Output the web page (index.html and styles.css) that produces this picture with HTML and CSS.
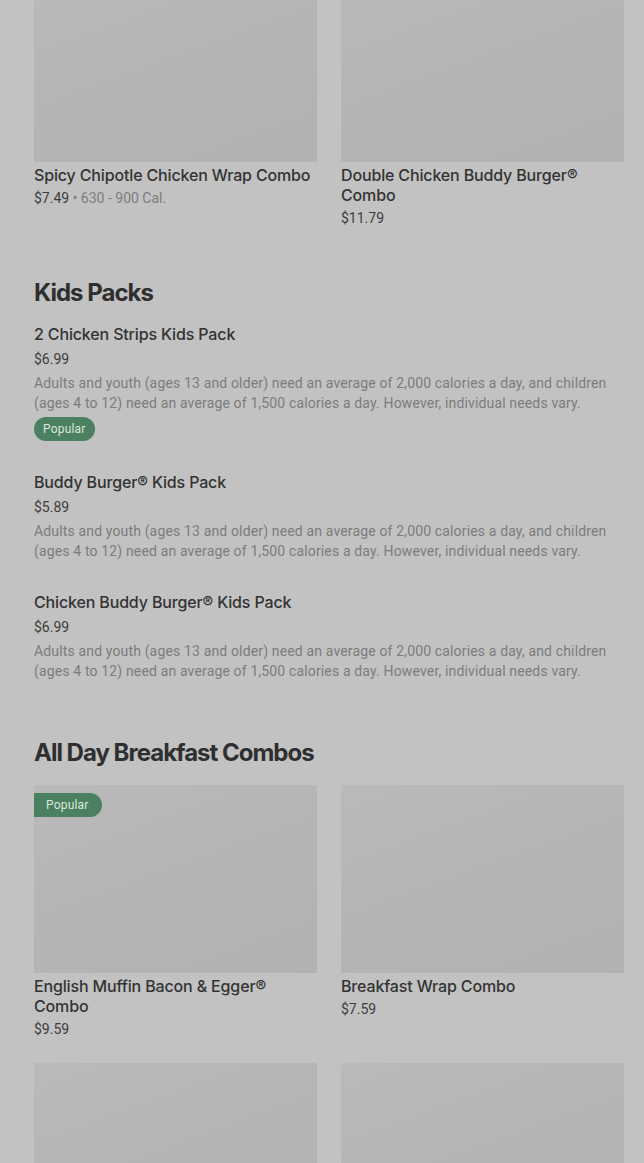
FILE: index.html
```html
<!DOCTYPE html>
<html lang="en">
<head>
<meta charset="utf-8">
<title>Menu</title>
<link rel="stylesheet" href="styles.css">
</head>
<body>
<main class="menu">
  <section class="section section-first">
    <div class="grid">
      <article class="card">
        <div class="card-media"></div>
        <h3 class="card-title">Spicy Chipotle Chicken Wrap Combo</h3>
        <p class="card-meta"><span class="price">$7.49</span><span class="dot"> • </span><span class="cal">630 - 900 Cal.</span></p>
      </article>
      <article class="card">
        <div class="card-media"></div>
        <h3 class="card-title">Double Chicken Buddy Burger® Combo</h3>
        <p class="card-meta"><span class="price">$11.79</span></p>
      </article>
    </div>
  </section>

  <section class="section">
    <h2 class="section-title">Kids Packs</h2>
    <ul class="list">
      <li class="item">
        <h3 class="item-title">2 Chicken Strips Kids Pack</h3>
        <p class="item-price">$6.99</p>
        <p class="item-desc">Adults and youth (ages 13 and older) need an average of 2,000 calories a day, and children (ages 4 to 12) need an average of 1,500 calories a day. However, individual needs vary.</p>
        <span class="badge">Popular</span>
      </li>
      <li class="item">
        <h3 class="item-title">Buddy Burger® Kids Pack</h3>
        <p class="item-price">$5.89</p>
        <p class="item-desc">Adults and youth (ages 13 and older) need an average of 2,000 calories a day, and children (ages 4 to 12) need an average of 1,500 calories a day. However, individual needs vary.</p>
      </li>
      <li class="item">
        <h3 class="item-title">Chicken Buddy Burger® Kids Pack</h3>
        <p class="item-price">$6.99</p>
        <p class="item-desc">Adults and youth (ages 13 and older) need an average of 2,000 calories a day, and children (ages 4 to 12) need an average of 1,500 calories a day. However, individual needs vary.</p>
      </li>
    </ul>
  </section>

  <section class="section">
    <h2 class="section-title">All Day Breakfast Combos</h2>
    <div class="grid">
      <article class="card">
        <div class="card-media"><span class="badge badge-flag">Popular</span></div>
        <h3 class="card-title">English Muffin Bacon &amp; Egger® Combo</h3>
        <p class="card-meta"><span class="price">$9.59</span></p>
      </article>
      <article class="card">
        <div class="card-media"></div>
        <h3 class="card-title">Breakfast Wrap Combo</h3>
        <p class="card-meta"><span class="price">$7.59</span></p>
      </article>
      <article class="card">
        <div class="card-media"></div>
      </article>
      <article class="card">
        <div class="card-media"></div>
      </article>
    </div>
  </section>
</main>
</body>
</html>
```

FILE: styles.css
```css
* { box-sizing: border-box; }

html, body {
  margin: 0;
  padding: 0;
  background: #c2c2c2;
  height: 1163px;
  overflow: hidden;
}

body {
  font-family: "Roboto", "Liberation Sans", sans-serif;
  color: #333333;
}

.menu {
  padding: 0 20px 0 34px;
  margin-top: -26px;
  display: flex;
  flex-direction: column;
  gap: 41px;
}

.section-first {
  padding-bottom: 8px;
}

.grid {
  display: grid;
  grid-template-columns: 1fr 1fr;
  column-gap: 24px;
  row-gap: 24px;
}

.card {
  display: flex;
  flex-direction: column;
}

.card-media {
  position: relative;
  height: 188px;
  background: linear-gradient(160deg, #bababa 0%, #b5b5b5 45%, #b2b2b2 100%);
  margin-bottom: 3px;
}

.card-title {
  margin: 0;
  font-family: "Inter", "Roboto", sans-serif;
  font-weight: 500;
  font-size: 16px;
  line-height: 20px;
  letter-spacing: -0.15px;
  color: #333333;
}

.card-meta {
  margin: 3px 0 0;
  font-size: 14px;
  line-height: 20px;
  color: #3d3d3d;
}

.card-meta .dot { color: #7a7a7a; }
.card-meta .cal { color: #7d7d7d; }

.section-title {
  margin: 0 0 16px;
  font-family: "Inter", "Roboto", sans-serif;
  font-weight: 700;
  font-size: 24px;
  line-height: 32px;
  letter-spacing: -1px;
  color: #2f2f2f;
}

.list {
  list-style: none;
  margin: -17px 0 0;
  padding: 0;
}

.item {
  display: flex;
  flex-direction: column;
  align-items: flex-start;
  padding: 16px 0 15px;
}

.item-title {
  margin: 0;
  font-family: "Inter", "Roboto", sans-serif;
  font-weight: 500;
  font-size: 16px;
  line-height: 20px;
  letter-spacing: -0.15px;
  color: #333333;
}

.item-price {
  margin: 5px 0 0;
  font-size: 14px;
  line-height: 20px;
  color: #3d3d3d;
}

.item-desc {
  margin: 4px 0 0;
  font-size: 14px;
  line-height: 20px;
  letter-spacing: 0.15px;
  color: #7c7c7c;
}

.badge {
  display: inline-flex;
  align-items: center;
  height: 24px;
  padding: 0 9px;
  margin-top: 4px;
  border-radius: 12px;
  background: #4b8061;
  color: #dbe7df;
  font-size: 12px;
  line-height: 24px;
  letter-spacing: 0.2px;
}

.badge-flag {
  position: absolute;
  top: 8px;
  left: 0;
  margin: 0;
  padding: 0 13px 0 12px;
  border-radius: 0 12px 12px 0;
}
```
